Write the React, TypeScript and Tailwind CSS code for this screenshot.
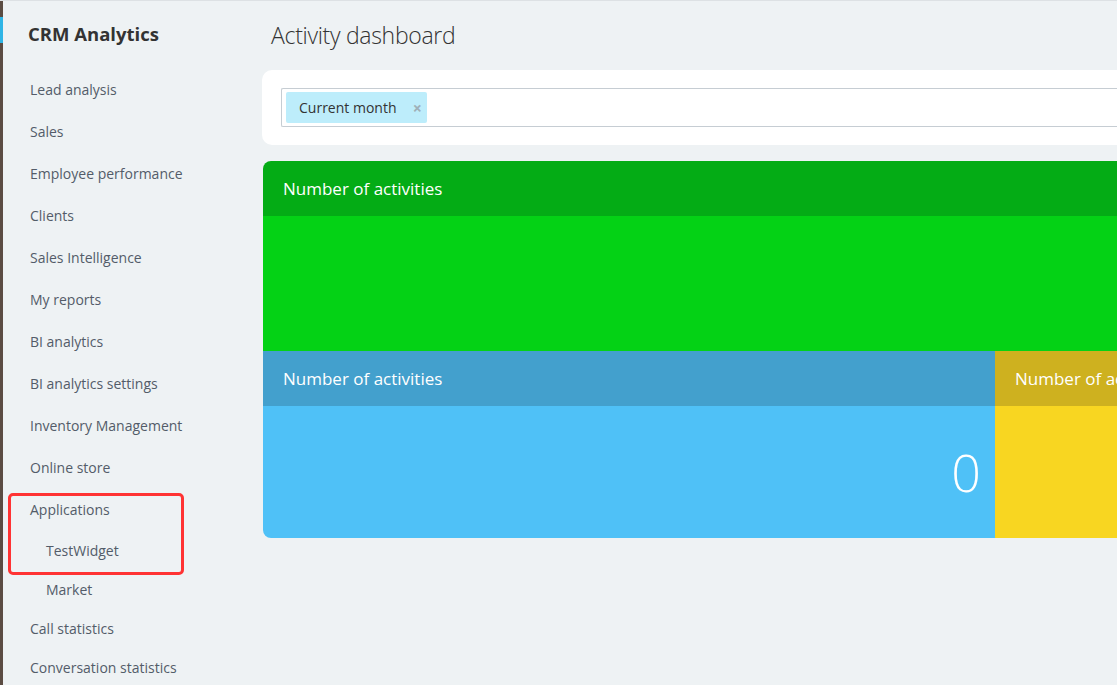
import React from 'react';

const menu = [
  'Lead analysis',
  'Sales',
  'Employee performance',
  'Clients',
  'Sales Intelligence',
  'My reports',
  'BI analytics',
  'BI analytics settings',
  'Inventory Management',
  'Online store',
  'Applications',
];

const tail = [
  { label: 'TestWidget', sub: true, h: 'h-[40px]' },
  { label: 'Market', sub: true, h: 'h-[39px]' },
  { label: 'Call statistics', sub: false, h: 'h-[39px]' },
  { label: 'Conversation statistics', sub: false, h: 'h-[39px]' },
];

function Sidebar() {
  return (
    <aside className="relative w-[259px] shrink-0">
      <div className="h-[67px] pl-[25px] pt-[20px]">
        <h2 className="text-[18.5px] leading-[26px] font-bold text-[#333]">CRM Analytics</h2>
      </div>
      <nav className="text-[14px] text-[#535c69]">
        {menu.map((item) => (
          <div key={item} className="h-[42px] flex items-center pl-[27px]">
            {item}
          </div>
        ))}
        {tail.map((item) => (
          <div
            key={item.label}
            className={`${item.h} flex items-center ${item.sub ? 'pl-[43px]' : 'pl-[27px]'}`}
          >
            {item.label}
          </div>
        ))}
      </nav>
      {/* annotation box */}
      <div className="absolute left-[5px] top-[492px] w-[176px] h-[82px] border-[3px] border-[#ff3333] rounded-[5px]" />
    </aside>
  );
}

function Widget({
  head,
  body,
  title,
  className = '',
  bodyH,
  children,
}: {
  head: string;
  body: string;
  title: string;
  className?: string;
  bodyH: string;
  children?: React.ReactNode;
}) {
  return (
    <div className={className}>
      <div className={`h-[55px] flex items-center pl-[20px] ${head} text-white text-[17px] whitespace-nowrap overflow-hidden`}>
        {title}
      </div>
      <div className={`${bodyH} ${body} flex items-center justify-end pr-[14px]`}>{children}</div>
    </div>
  );
}

export default function App() {
  return (
    <div
      className="w-full h-[685px] overflow-hidden flex bg-[#eef2f4] border-t border-[#dde1e4]"
      style={{ fontFamily: '"Open Sans", "Noto Sans", sans-serif' }}
    >
      {/* left edge strip */}
      <div className="w-[3px] shrink-0 bg-[#5b4c43] flex flex-col">
        <div className="h-[16px]" />
        <div className="h-[26px] bg-[#2fb5e6]" />
      </div>

      <Sidebar />

      <main className="flex-1 min-w-0 overflow-hidden">
        <div className="h-[69px] flex items-center pl-[9px]">
          <h1 className="text-[23px] font-light text-[#333] tracking-[-0.3px]">Activity dashboard</h1>
        </div>

        <div className="bg-white rounded-l-[10px] h-[75px] pl-[19px] pt-[18px]">
          <div className="h-[39px] border border-[#c6cdd3] border-r-0 rounded-l-[2px] flex items-center pl-[4px]">
            <div className="h-[31px] w-[141px] bg-[#bdedfb] rounded-[2px] flex items-center pl-[13px] text-[14px] text-[#333]">
              <span>Current month</span>
              <span className="ml-auto mr-[5px] text-[16px] font-bold leading-none text-[#9fb0b8]">×</span>
            </div>
          </div>
        </div>

        <div className="mt-[16px] ml-[1px] rounded-tl-[8px] rounded-bl-[8px] overflow-hidden">
          <Widget head="bg-[#04ac15]" body="bg-[#04d215]" title="Number of activities" bodyH="h-[135px]" />
          <div className="flex">
            <Widget
              head="bg-[#43a0cd]"
              body="bg-[#4fc1f7]"
              title="Number of activities"
              bodyH="h-[132px]"
              className="w-[732px] shrink-0"
            >
              <span className="text-[52px] font-light text-white leading-none">0</span>
            </Widget>
            <Widget
              head="bg-[#ceb11f]"
              body="bg-[#f8d621]"
              title="Number of activities"
              bodyH="h-[132px]"
              className="flex-1 min-w-0"
            />
          </div>
        </div>
      </main>
    </div>
  );
}
